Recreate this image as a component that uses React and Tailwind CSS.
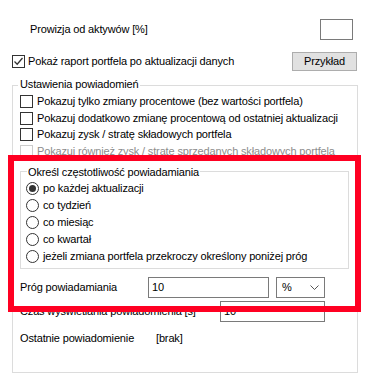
import React from "react";

function Check({ checked, disabled }) {
  return (
    <div
      className={
        "w-[13px] h-[13px] shrink-0 border bg-white flex items-center justify-center " +
        (disabled ? "border-[#cccccc]" : "border-[#333333]")
      }
    >
      {checked && (
        <svg width="11" height="11" viewBox="0 0 11 11">
          <path d="M1.5 5.5 L4.2 8.2 L9.5 2" fill="none" stroke="#333" strokeWidth="1.3" />
        </svg>
      )}
    </div>
  );
}

function Radio({ checked }) {
  return (
    <div className="w-[13px] h-[13px] shrink-0 rounded-full border border-[#333333] bg-white flex items-center justify-center">
      {checked && <div className="w-[7px] h-[7px] rounded-full bg-[#333333]" />}
    </div>
  );
}

export default function App() {
  const checks = [
    ["Pokazuj tylko zmiany procentowe (bez wartości portfela)", false],
    ["Pokazuj dodatkowo zmianę procentową od ostatniej aktualizacji", false],
    ["Pokazuj zysk / stratę składowych portfela", false],
    ["Pokazuj również zysk / stratę sprzedanych składowych portfela", true],
  ];
  const radios = [
    ["po każdej aktualizacji", true],
    ["co tydzień", false],
    ["co miesiąc", false],
    ["co kwartał", false],
    ["jeżeli zmiana portfela przekroczy określony poniżej próg", false],
  ];
  return (
    <div
      className="relative w-[376px] h-[391px] bg-white text-black text-[11px] tracking-[-0.15px] leading-none whitespace-nowrap overflow-hidden"
      style={{ fontFamily: '"Liberation Sans", Arial, sans-serif' }}
    >
      {/* Row 1 */}
      <div className="pt-[19px] flex items-center h-[40px]">
        <span className="pl-[30px]">Prowizja od aktywów [%]</span>
        <div className="ml-auto mr-[23px] w-[33px] h-[21px] border border-[#7a7a7a] bg-white" />
      </div>
      {/* Row 2 */}
      <div className="mt-[12px] flex items-center h-[18px]">
        <div className="ml-[12px]">
          <Check checked />
        </div>
        <span className="ml-[3px]">Pokaż raport portfela po aktualizacji danych</span>
        <div className="ml-auto mr-[19px] w-[65px] h-[19px] border border-[#adadad] bg-[#e1e1e1] flex items-center justify-center">
          Przykład
        </div>
      </div>
      {/* Group */}
      <div className="relative mt-[15px] ml-[12px] w-[346px] h-[288px] border border-[#dcdcdc]">
        <span className="absolute left-[5px] -top-[7px] px-[2px] bg-white">Ustawienia powiadomień</span>
        <div className="pt-[9px] pl-[7px]">
          {checks.map(([t, dis]) => (
            <div key={t} className="h-[16.5px] flex items-start">
              <Check disabled={dis} />
              <span className={"ml-[4px] mt-[1px] " + (dis ? "text-[#8c8c8c]" : "")}>{t}</span>
            </div>
          ))}
        </div>
        <div className="relative mt-[10px] ml-[7px] w-[329px] h-[98px] border border-[#dcdcdc]">
          <span className="absolute left-[6px] -top-[5px] px-[1px] bg-white">
            Określ częstotliwość powiadamiania
          </span>
          <div className="pt-[8px] pl-[5px]">
            {radios.map(([t, c]) => (
              <div key={t} className="h-[17px] flex items-center">
                <Radio checked={c} />
                <span className="ml-[4px]">{t}</span>
              </div>
            ))}
          </div>
        </div>
        <div className="mt-[8px] flex items-center h-[21px]">
          <span className="pl-[7px] w-[135px]">Próg powiadamiania</span>
          <div className="w-[121px] h-[21px] border border-[#7a7a7a] flex items-center pl-[3px]">10</div>
          <div className="ml-[7px] w-[49px] h-[21px] border border-[#7a7a7a] flex items-center pl-[5px]">
            <span>%</span>
            <svg className="ml-auto mr-[5px]" width="9" height="6" viewBox="0 0 9 6">
              <path d="M0.5 0.5 L4.5 4.5 L8.5 0.5" fill="none" stroke="#555" strokeWidth="1" />
            </svg>
          </div>
        </div>
        <div className="mt-[3px] flex items-center h-[21px]">
          <span className="pl-[7px] w-[207px]">Czas wyświetlania powiadomienia [s]</span>
          <div className="w-[105px] h-[21px] border border-[#7a7a7a] flex items-center pl-[3px]">10</div>
        </div>
        <div className="mt-[10px] flex items-center h-[12px]">
          <span className="pl-[7px] w-[143px]">Ostatnie powiadomienie</span>
          <span>[brak]</span>
        </div>
      </div>
      {/* Red highlight overlay */}
      <div className="absolute left-[8px] top-[155px] w-[353px] h-[157px] border-[6px] border-[#ff0022] z-10 pointer-events-none" />
    </div>
  );
}
